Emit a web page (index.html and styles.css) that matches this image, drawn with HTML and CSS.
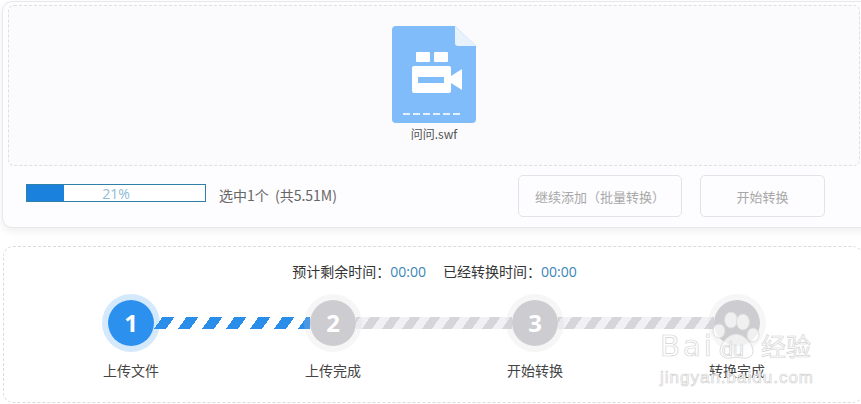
FILE: index.html
```html
<!DOCTYPE html>
<html lang="zh-CN">
<head>
  <meta charset="UTF-8" />
  <title>swf转换</title>
  <link rel="stylesheet" href="styles.css">
</head>
<body>
  <div class="upload-card">
    <div class="drop-zone">
      <div class="file-item">
        <svg class="file-icon" width="84" height="97" viewBox="0 0 84 97">
          <path d="M4 0H63L84 20V93a4 4 0 0 1-4 4H4a4 4 0 0 1-4-4V4a4 4 0 0 1 4-4z" fill="#7fbcf9"/>
          <path d="M63 0L84 20H66a3 3 0 0 1-3-3z" fill="#e8f2fc"/>
          <rect x="24" y="26" width="14" height="10" rx="1" fill="#fff"/>
          <rect x="42" y="26" width="14" height="10" rx="1" fill="#fff"/>
          <path d="M20 42a2 2 0 0 1 2-2H57a2 2 0 0 1 2 2v23a2 2 0 0 1-2 2H22a2 2 0 0 1-2-2z" fill="#fff"/>
          <path d="M59 50L70 43V64L59 57z" fill="#fff"/>
          <rect x="26" y="51" width="26" height="6" fill="#7fbcf9"/>
          <path d="M11 88H70" stroke="#e3f0fd" stroke-width="2" stroke-dasharray="7 3"/>
        </svg>
        <div class="file-name">问问.swf</div>
      </div>
    </div>
    <div class="action-row">
      <div class="progress">
        <div class="progress-fill" style="width: 21%"></div>
        <span class="progress-text">21%</span>
      </div>
      <span class="selected-info">选中1个 (共5.51M)</span>
      <button class="btn btn-add">继续添加（批量转换）</button>
      <button class="btn btn-start">开始转换</button>
    </div>
  </div>

  <div class="steps-card">
    <div class="time-row">
      <span>预计剩余时间：<b>00:00</b></span>
      <span>已经转换时间：<b>00:00</b></span>
    </div>
    <div class="steps">
      <div class="step active">
        <div class="step-num">1</div>
        <div class="step-label">上传文件</div>
      </div>
      <div class="bar bar-blue"></div>
      <div class="step">
        <div class="step-num">2</div>
        <div class="step-label">上传完成</div>
      </div>
      <div class="bar"></div>
      <div class="step">
        <div class="step-num">3</div>
        <div class="step-label">开始转换</div>
      </div>
      <div class="bar"></div>
      <div class="step">
        <div class="step-num"></div>
        <div class="step-label">转换完成</div>
      </div>
    </div>
  </div>

  <!-- photo site watermark over the last step -->
  <div class="watermark">
    <svg class="wm-paw" width="50" height="50" viewBox="0 0 50 50">
      <g fill="#fff" fill-opacity=".7" stroke="#dcdcdc" stroke-width="1">
        <ellipse cx="19" cy="10" rx="6.500" ry="8"/>
        <ellipse cx="31" cy="12" rx="6.500" ry="8"/>
        <ellipse cx="7" cy="21" rx="6" ry="7"/>
        <ellipse cx="41" cy="25" rx="6" ry="7"/>
        <path d="M24 24c7 0 17 9 17 17 0 6-6 8-11 7-4-1-7-1-11 0-5 1-11-1-11-7 0-8 9-17 16-17z"/>
      </g>
    </svg>
    <div class="wm-top"><span class="wm-bai">Bai</span><span class="wm-du">du</span><span class="wm-cn">经验</span></div>
    <div class="wm-url">jingyan.baidu.com</div>
  </div>
</body>
</html>
```

FILE: styles.css
```css
body { margin: 0; width: 861px; height: 404px; overflow: hidden; position: relative; background: #fff; font-family: "Noto Sans CJK SC", "Open Sans", sans-serif; color: #444; }

.upload-card { margin: 1px -20px 0 2px; height: 227px; box-sizing: border-box; padding: 3px 0 0 5px; background: #fdfcfe; border: 1px solid #e8e7ea; border-radius: 10px; box-shadow: 0 3px 8px rgba(0, 0, 0, 0.07); }
.drop-zone { width: 852px; height: 161px; box-sizing: border-box; padding-top: 20px; background: #fbfafc; border: 1px dashed #dfdee2; border-radius: 6px; }
.file-item { width: 120px; margin-left: 365px; display: flex; flex-direction: column; align-items: center; }
.file-icon { display: block; }
.file-name { margin-top: 2px; font-size: 12px; line-height: 18px; color: #555; }

.action-row { display: flex; align-items: flex-start; padding: 9px 0 0 18px; }
.progress { position: relative; width: 178px; height: 16px; margin-top: 9px; border: 1px solid #2f7fa8; background: #fff; }
.progress-fill { height: 100%; background: #1a82dc; }
.progress-text { position: absolute; top: 0; left: 0; right: 0; text-align: center; font-size: 14px; line-height: 18px; color: #8cbcd8; font-family: "Open Sans", sans-serif; }
.selected-info { width: 118px; margin: 10px 0 0 13px; font-size: 14px; line-height: 20px; color: #666; white-space: nowrap; word-spacing: 3px; }
.btn { height: 42px; box-sizing: border-box; background: #fdfcfe; border: 1px solid #e3e2e6; border-radius: 5px; font-family: inherit; font-size: 13px; color: #a8a8a8; padding: 0; }
.btn-add { width: 164px; margin-left: 181px; }
.btn-start { width: 125px; margin-left: 18px; }

.steps-card { margin: 18px -2px 0 3px; height: 157px; box-sizing: border-box; border: 1px dashed #dcdbdf; border-radius: 10px; background: #fff; }
.time-row { display: flex; justify-content: center; gap: 17px; margin: 14px -3px 0 0; font-size: 14px; line-height: 20px; color: #333; }
.time-row b { font-weight: normal; color: #3d85b5; font-family: "Open Sans", sans-serif; }

.steps { display: flex; align-items: flex-start; padding: 12px 0 0 98px; }
.step { width: 58px; display: flex; flex-direction: column; align-items: center; position: relative; z-index: 1; }
.step-num { width: 46px; height: 46px; border-radius: 50%; background: #cdccd0; background-clip: padding-box; border: 6px solid rgba(205, 204, 208, 0.18); color: #fff; font: bold 24px/46px "Open Sans", sans-serif; text-align: center; }
.step.active .step-num { background-color: #2b90ee; border-color: rgba(43, 144, 238, 0.2); }
.step-label { margin-top: 8px; font-size: 14px; line-height: 20px; color: #444; white-space: nowrap; }
.bar { width: 156px; height: 12px; margin: 23px -6px 0; flex-shrink: 0; background: repeating-linear-gradient(-55deg, #d6d5d9 0 8.200px, #f1f0f3 8.200px 16.400px); }
.bar-blue { background: repeating-linear-gradient(-55deg, #2b8dea 0 9.800px, #fff 9.800px 19.660px); }

.watermark { position: absolute; left: 660px; top: 330px; width: 160px; z-index: 2; color: #fff; }
.wm-paw { position: absolute; left: 52px; top: -20px; }
.wm-top { position: relative; display: flex; align-items: baseline; height: 30px; white-space: nowrap; }
.wm-bai { font: 29px/30px "DejaVu Sans", sans-serif; letter-spacing: 3px; }
.wm-du { margin-left: 7px; font: 20px/30px "Liberation Sans", sans-serif; }
.wm-cn { margin-left: 17px; font: 25px/30px "Noto Sans CJK SC", sans-serif; }
.wm-top span, .wm-url { -webkit-text-stroke: 0.7px #d4d4d4; }
.wm-url { margin-top: 9px; font: 17px/18px "Liberation Sans", sans-serif; letter-spacing: 1px; white-space: nowrap; }
```
